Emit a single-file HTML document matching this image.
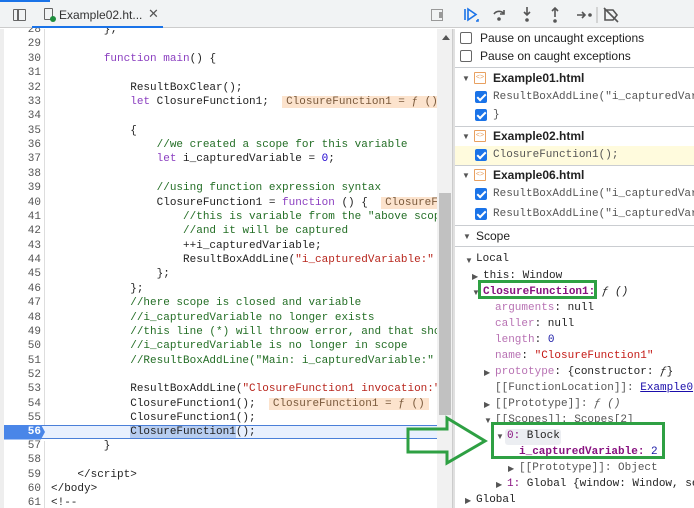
<!DOCTYPE html><html><head><style>
*{margin:0;padding:0;box-sizing:border-box}
body{width:694px;height:508px;overflow:hidden;background:#fff;font-family:"Liberation Sans",sans-serif;position:relative}
.a{position:absolute;white-space:pre}
#code{position:absolute;left:0;top:23px;width:437px;height:485px;overflow:hidden;font-family:"Liberation Mono",monospace;font-size:11px;line-height:14.38px;color:#222}
#code .l{position:relative;height:14.38px;white-space:pre}
#code .n{position:absolute;left:4px;width:37px;text-align:right;color:#555}
#code .t{position:absolute;left:51px}
.k{color:#8b3fc0}.c{color:#236e25}.s{color:#b8261d}.num{color:#1c00cf}
.b{background:#fce3cd;color:#7a5a3c;padding:0 4px}
.r{position:absolute;left:455px;font-size:12px;color:#222;white-space:pre}
.m{font-family:"Liberation Mono",monospace;font-size:11px}
.cb{display:inline-block;width:12px;height:12px;border:1px solid #666;border-radius:2px;vertical-align:-2px;margin-right:8px}
.ck{position:absolute;width:12px;height:12px;background:#1a73e8;border-radius:2px}
.ck:after{content:"";position:absolute;left:4px;top:1px;width:3px;height:7px;border:solid #fff;border-width:0 2px 2px 0;transform:rotate(45deg)}
.sep{position:absolute;left:455px;width:239px;height:1px;background:#cacdd1}
.tri{position:absolute;font-size:8px;color:#555}
.fi{position:absolute;width:12px;height:12px;border:1px solid #e8a060;border-radius:1px;font-size:7px;color:#e8a060;text-align:center;line-height:10px}
.p{color:#881280}.g{color:#555}.sv{color:#c41a16}.nv{color:#1a1aa6}
#tree{position:absolute;left:0;top:3px;width:694px;height:505px}
</style></head><body>
<div style="position:absolute;left:0;top:0;width:453px;height:28px;background:#f1f3f4;border-bottom:1px solid #ccc"></div>
<div style="position:absolute;left:0;top:0;width:50px;height:2px;background:#1a73e8"></div>
<div style="position:absolute;left:13px;top:9px;width:13px;height:12px;border:1.5px solid #666;border-radius:1px"></div>
<div style="position:absolute;left:17px;top:10px;width:1.5px;height:10px;background:#666"></div>
<div style="position:absolute;left:44px;top:8px;width:9px;height:12px;border:1px solid #666;border-radius:1px"></div>
<div style="position:absolute;left:50px;top:16px;width:6px;height:6px;background:#1e8e3e;border-radius:50%"></div>
<div class="a" style="left:59px;top:8px;font-size:12px;color:#333">Example02.ht...</div>
<div class="a" style="left:148px;top:6px;font-size:13px;color:#555">✕</div>
<div style="position:absolute;left:32px;top:26px;width:131px;height:2px;background:#1a73e8"></div>
<div style="position:absolute;left:431px;top:9px;width:12px;height:12px;border:1px solid #999"></div>
<div style="position:absolute;left:439px;top:12px;width:3px;height:6px;background:#999"></div>

<div id="code">
<div class="l"><span class="n">28</span><span class="t">        };</span></div>
<div class="l"><span class="n">29</span></div>
<div class="l"><span class="n">30</span><span class="t">        <span class="k">function</span> <span class="k">main</span>() {</span></div>
<div class="l"><span class="n">31</span></div>
<div class="l"><span class="n">32</span><span class="t">            ResultBoxClear();</span></div>
<div class="l"><span class="n">33</span><span class="t">            <span class="k">let</span> ClosureFunction1;  <span class="b">ClosureFunction1 = ƒ ()</span></span></div>
<div class="l"><span class="n">34</span></div>
<div class="l"><span class="n">35</span><span class="t">            {</span></div>
<div class="l"><span class="n">36</span><span class="t">                <span class="c">//we created a scope for this variable</span></span></div>
<div class="l"><span class="n">37</span><span class="t">                <span class="k">let</span> i_capturedVariable = <span class="num">0</span>;</span></div>
<div class="l"><span class="n">38</span></div>
<div class="l"><span class="n">39</span><span class="t">                <span class="c">//using function expression syntax</span></span></div>
<div class="l"><span class="n">40</span><span class="t">                ClosureFunction1 = <span class="k">function</span> () {  <span class="b">ClosureFunction1</span></span></div>
<div class="l"><span class="n">41</span><span class="t">                    <span class="c">//this is variable from the "above scope"</span></span></div>
<div class="l"><span class="n">42</span><span class="t">                    <span class="c">//and it will be captured</span></span></div>
<div class="l"><span class="n">43</span><span class="t">                    ++i_capturedVariable;</span></div>
<div class="l"><span class="n">44</span><span class="t">                    ResultBoxAddLine(<span class="s">"i_capturedVariable:"</span></span></div>
<div class="l"><span class="n">45</span><span class="t">                };</span></div>
<div class="l"><span class="n">46</span><span class="t">            };</span></div>
<div class="l"><span class="n">47</span><span class="t">            <span class="c">//here scope is closed and variable</span></span></div>
<div class="l"><span class="n">48</span><span class="t">            <span class="c">//i_capturedVariable no longer exists</span></span></div>
<div class="l"><span class="n">49</span><span class="t">            <span class="c">//this line (*) will throow error, and that should</span></span></div>
<div class="l"><span class="n">50</span><span class="t">            <span class="c">//i_capturedVariable is no longer in scope</span></span></div>
<div class="l"><span class="n">51</span><span class="t">            <span class="c">//ResultBoxAddLine("Main: i_capturedVariable:"</span></span></div>
<div class="l"><span class="n">52</span></div>
<div class="l"><span class="n">53</span><span class="t">            ResultBoxAddLine(<span class="s">"ClosureFunction1 invocation:"</span></span></div>
<div class="l"><span class="n">54</span><span class="t">            ClosureFunction1();  <span class="b">ClosureFunction1 = ƒ ()</span></span></div>
<div class="l"><span class="n">55</span><span class="t">            ClosureFunction1();</span></div>
<div class="l" style="background:#e8f0fe;border-top:1px solid #4a7fd8;border-bottom:1px solid #4a7fd8;margin-top:-1px"><span style="position:absolute;left:4px;top:-1px;width:41px;height:15px;background:#4a86e8;clip-path:polygon(0 0,90% 0,100% 50%,90% 100%,0 100%)"></span><span class="n" style="color:#fff;font-weight:bold;top:-1px">56</span><span class="t" style="top:-1px">            <span style="background:#b7cdf0">ClosureFunction1</span>();</span></div>
<div class="l"><span class="n">57</span><span class="t">        }</span></div>
<div class="l"><span class="n">58</span></div>
<div class="l"><span class="n">59</span><span class="t">    &lt;/script&gt;</span></div>
<div class="l"><span class="n">60</span><span class="t">&lt;/body&gt;</span></div>
<div class="l"><span class="n">61</span><span class="t">&lt;!--</span></div>
</div>
<div style="position:absolute;left:0;top:0;width:453px;height:28px;background:#f1f3f4;border-bottom:1px solid #ccc;z-index:-0"></div>
<div style="position:absolute;left:0;top:0;width:50px;height:2px;background:#1a73e8"></div>
<div style="position:absolute;left:13px;top:9px;width:13px;height:12px;border:1.5px solid #666;border-radius:1px"></div>
<div style="position:absolute;left:17px;top:10px;width:1.5px;height:10px;background:#666"></div>
<div style="position:absolute;left:44px;top:8px;width:9px;height:12px;border:1px solid #666;border-radius:1px"></div>
<div style="position:absolute;left:50px;top:16px;width:6px;height:6px;background:#1e8e3e;border-radius:50%"></div>
<div class="a" style="left:59px;top:8px;font-size:12px;color:#333">Example02.ht...</div>
<div class="a" style="left:148px;top:6px;font-size:13px;color:#555">✕</div>
<div style="position:absolute;left:32px;top:26px;width:131px;height:2px;background:#1a73e8"></div>
<div style="position:absolute;left:431px;top:9px;width:12px;height:12px;border:1px solid #999"></div>
<div style="position:absolute;left:439px;top:12px;width:3px;height:6px;background:#999"></div>
<div style="position:absolute;left:0;top:29px;width:4px;height:479px;background:#eee"></div>
<div style="position:absolute;left:44px;top:29px;width:1px;height:396px;background:#ddd"></div>
<div style="position:absolute;left:44px;top:441px;width:1px;height:67px;background:#ddd"></div>
<div style="position:absolute;left:437px;top:29px;width:16px;height:479px;background:#f1f1f1;border-right:1px solid #ccc"></div>
<div style="position:absolute;left:442px;top:35px;width:0;height:0;border-left:4px solid transparent;border-right:4px solid transparent;border-bottom:5px solid #555"></div>
<div style="position:absolute;left:439px;top:193px;width:12px;height:222px;background:#c1c1c1"></div>

<div style="position:absolute;left:453px;top:0;width:241px;height:28px;background:#f1f3f4;border-bottom:1px solid #ccc"></div>
<svg style="position:absolute;left:460px;top:4px" width="160" height="22" viewBox="0 0 160 22" fill="none" stroke-width="1.6">
<path d="M5 5v11" stroke="#1a73e8"/><path d="M8 5l8 5.5-8 5.5z" stroke="#1a73e8"/><path d="M16 17l2 0 0-2" stroke="#1a73e8"/>
<path d="M34 10a6 6 0 0 1 10 0" stroke="#555"/><path d="M44 6v4h-4" stroke="#555"/><circle cx="39" cy="15" r="1.8" fill="#555" stroke="none"/>
<path d="M67 3v8M64 8l3 3 3-3" stroke="#555"/><circle cx="67" cy="16" r="1.8" fill="#555" stroke="none"/>
<path d="M95 13v-9M92 7l3-3 3 3" stroke="#555"/><circle cx="95" cy="17" r="1.8" fill="#555" stroke="none"/>
<path d="M117 11h8M122 8l3 3-3 3" stroke="#555"/><circle cx="130" cy="11" r="1.8" fill="#555" stroke="none"/>
<path d="M137 3v16" stroke="#ccc"/>
<path d="M145 6h8l4 5-4 5h-8z M144 4l14 14" stroke="#555"/>
</svg>
<div style="position:absolute;left:453px;top:29px;width:2px;height:479px;background:#e0e0e0"></div>

<div class="r" style="left:460px;top:31px"><span class="cb"></span>Pause on uncaught exceptions</div>
<div class="r" style="left:460px;top:49px"><span class="cb"></span>Pause on caught exceptions</div>
<div class="sep" style="top:67px"></div>
<div class="tri" style="left:462px;top:74px">▼</div><div class="fi" style="left:474px;top:72px">&lt;&gt;</div><div class="r" style="left:493px;top:71px;font-weight:bold">Example01.html</div>
<div class="ck" style="left:475px;top:91px"></div><div class="r m" style="left:493px;top:91px;color:#555">ResultBoxAddLine("i_capturedVar</div>
<div class="ck" style="left:475px;top:109px"></div><div class="r m" style="left:493px;top:109px;color:#555">}</div>
<div class="sep" style="top:126px"></div>
<div class="tri" style="left:462px;top:132px">▼</div><div class="fi" style="left:474px;top:130px">&lt;&gt;</div><div class="r" style="left:493px;top:129px;font-weight:bold">Example02.html</div>
<div style="position:absolute;left:455px;top:146px;width:239px;height:19px;background:#fffbdd"></div>
<div class="ck" style="left:475px;top:149px"></div><div class="r m" style="left:493px;top:149px;color:#555">ClosureFunction1();</div>
<div class="sep" style="top:165px"></div>
<div class="tri" style="left:462px;top:171px">▼</div><div class="fi" style="left:474px;top:169px">&lt;&gt;</div><div class="r" style="left:493px;top:168px;font-weight:bold">Example06.html</div>
<div class="ck" style="left:475px;top:188px"></div><div class="r m" style="left:493px;top:188px;color:#555">ResultBoxAddLine("i_capturedVar</div>
<div class="ck" style="left:475px;top:208px"></div><div class="r m" style="left:493px;top:208px;color:#555">ResultBoxAddLine("i_capturedVar</div>
<div class="sep" style="top:225px"></div>
<div class="tri" style="left:463px;top:232px">▼</div><div class="r" style="left:476px;top:229px">Scope</div>
<div class="sep" style="top:246px"></div>

<div id="tree">
<div class="tri" style="left:465px;top:253px">▼</div><div class="r m" style="left:476px;top:250px">Local</div>
<div class="tri" style="left:472px;top:269px">▶</div><div class="r m" style="left:483px;top:267px">this: Window</div>
<div class="tri" style="left:472px;top:285px">▼</div><div class="r m" style="left:483px;top:283px"><b class="p">ClosureFunction1:</b> <i>ƒ ()</i></div>
<div class="r m" style="left:495px;top:299px"><span class="p" style="opacity:.6">arguments</span>: null</div>
<div class="r m" style="left:495px;top:315px"><span class="p" style="opacity:.6">caller</span>: null</div>
<div class="r m" style="left:495px;top:331px"><span class="p" style="opacity:.6">length</span>: <span class="nv">0</span></div>
<div class="r m" style="left:495px;top:347px"><span class="p" style="opacity:.6">name</span>: <span class="sv">"ClosureFunction1"</span></div>
<div class="tri" style="left:484px;top:365px">▶</div><div class="r m" style="left:495px;top:363px"><span class="p" style="opacity:.6">prototype</span>: {constructor: <i>ƒ</i>}</div>
<div class="r m" style="left:495px;top:379px;color:#555">[[FunctionLocation]]: <span style="color:#1a0dab;text-decoration:underline">Example0</span></div>
<div class="tri" style="left:484px;top:397px">▶</div><div class="r m" style="left:495px;top:395px;color:#555">[[Prototype]]: <i>ƒ ()</i></div>
<div class="tri" style="left:484px;top:413px">▼</div><div class="r m" style="left:495px;top:411px;color:#555">[[Scopes]]: Scopes[2]</div>
<div style="position:absolute;left:505px;top:426px;width:56px;height:16px;background:#eceef2;border-radius:3px"></div>
<div class="tri" style="left:496px;top:429px">▼</div><div class="r m" style="left:507px;top:427px"><span class="p">0:</span> Block</div>
<div class="r m" style="left:519px;top:443px"><b class="p">i_capturedVariable:</b> <span class="nv">2</span></div>
<div class="tri" style="left:508px;top:461px">▶</div><div class="r m" style="left:519px;top:459px;color:#555">[[Prototype]]: Object</div>
<div class="tri" style="left:496px;top:477px">▶</div><div class="r m" style="left:507px;top:475px"><span class="p">1:</span> Global {window: Window, se</div>
<div class="tri" style="left:465px;top:493px">▶</div><div class="r m" style="left:476px;top:491px">Global</div>
</div>

<div style="position:absolute;left:478px;top:280px;width:119px;height:19px;border:3px solid #2ea043"></div>
<div style="position:absolute;left:491px;top:422px;width:174px;height:37px;border:3px solid #2ea043"></div>
<svg style="position:absolute;left:400px;top:410px" width="100" height="60"><path d="M8 19H47V8L85 31 47 53V42H8Z" fill="none" stroke="#2ea043" stroke-width="3"/></svg>
</body></html>
